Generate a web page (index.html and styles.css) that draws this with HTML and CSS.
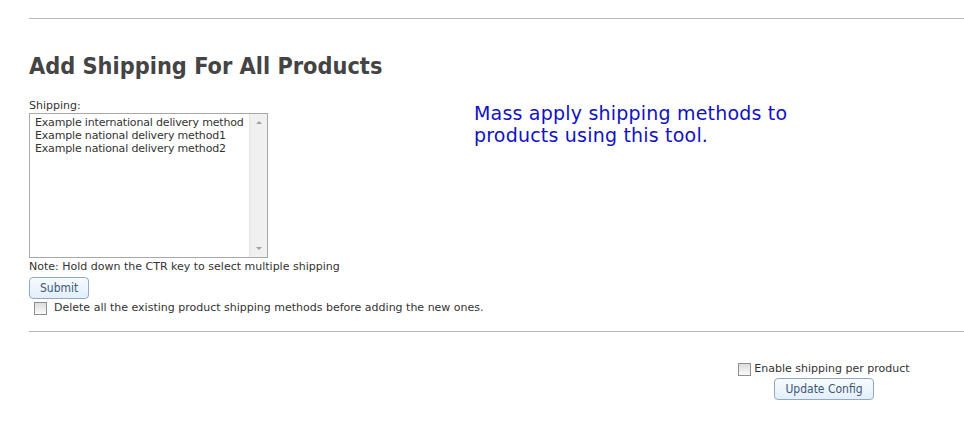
FILE: index.html
```html
<!DOCTYPE html>
<html>
<head>
<meta charset="utf-8">
<link rel="stylesheet" href="styles.css">
</head>
<body>
<div class="page">
  <hr class="rule rule-top">
  <h2 class="title">Add Shipping For All Products</h2>
  <div class="row">
    <form class="mass-form">
      <label class="field-label">Shipping:</label>
      <div class="listbox">
        <div class="options">
          <div>Example international delivery method</div>
          <div>Example national delivery method1</div>
          <div>Example national delivery method2</div>
        </div>
        <div class="scrollbar">
          <span class="arrow up"></span>
          <span class="arrow down"></span>
        </div>
      </div>
      <div class="note">Note: Hold down the CTR key to select multiple shipping</div>
      <button type="button" class="btn">Submit</button>
      <label class="check-line">
        <span class="checkbox"></span>
        <span>Delete all the existing product shipping methods before adding the new ones.</span>
      </label>
    </form>
    <p class="info">Mass apply shipping methods to<br>products using this tool.</p>
  </div>
  <hr class="rule rule-bottom">
  <div class="config">
    <label class="config-check"><span class="checkbox"></span><span>Enable shipping per product</span></label>
    <button type="button" class="btn btn-config">Update Config</button>
  </div>
</div>
</body>
</html>
```

FILE: styles.css
```css
html, body { margin: 0; padding: 0; background: #fff; }
body {
  font-family: "DejaVu Sans", sans-serif;
  font-size: 11px;
  color: #333;
}
.page { padding-left: 29px; }
.rule {
  border: 0;
  height: 1px;
  background: #b8b8b8;
  margin: 0;
}
.rule-top { margin-top: 18px; }
.title {
  margin: 31px 0 0;
  font-family: "DejaVu Sans Condensed", "DejaVu Sans", sans-serif;
  font-size: 23.3px;
  font-weight: bold;
  color: #444;
  line-height: 32px;
}
.row { display: flex; margin-top: 17px; }
.mass-form { width: 445px; flex: none; display: flex; flex-direction: column; align-items: flex-start; white-space: nowrap; }
.field-label { line-height: 13px; height: 13px; color: #333; }
.listbox {
  margin-top: 1px;
  width: 237px;
  height: 143px;
  border: 1px solid #a9a9a9;
  display: flex;
  background: #fff;
}
.options { flex: 1; min-width: 0; overflow: hidden; padding: 2px 0 0 5px; line-height: 13px; color: #333; letter-spacing: -0.17px; }
.scrollbar {
  width: 17px;
  flex: none;
  background: #f0f0f0;
  border-left: 1px solid #e4e4e4;
  position: relative;
}
.arrow {
  position: absolute;
  left: 6px;
  width: 0; height: 0;
  border-left: 3px solid transparent;
  border-right: 3px solid transparent;
}
.arrow.up { top: 7px; border-bottom: 3px solid #a0a0a0; }
.arrow.down { bottom: 7px; border-top: 3px solid #a0a0a0; }
.note { margin-top: 2px; line-height: 14px; }
.btn {
  font-family: "DejaVu Sans Condensed", "DejaVu Sans", sans-serif;
  font-size: 12px;
  color: #3d5877;
  background: linear-gradient(#f7fbff, #e3eefa);
  border: 1px solid #8fa9c6;
  border-radius: 4px;
  height: 22px;
  padding: 0 10px;
  margin-top: 3px;
}
.check-line { display: flex; align-items: center; margin-top: 2px; padding-left: 5px; line-height: 14px; }
.checkbox {
  display: inline-block;
  flex: none;
  width: 11px; height: 11px;
  border: 1px solid #8f8f8f;
  background: linear-gradient(#dcdcdc, #fafafa);
  margin-right: 7px;
  box-sizing: content-box;
}
.info {
  margin: 0;
  padding-top: 3px;
  color: #1212c0;
  font-family: "DejaVu Sans", sans-serif;
  font-size: 19px;
  letter-spacing: 0.2px;
  line-height: 22px;
  white-space: nowrap;
}
.rule-bottom { margin-top: 16px; }
.config {
  display: flex;
  flex-direction: column;
  align-items: center;
  width: 180px;
  margin-left: 705px;
  margin-top: 30px;
  white-space: nowrap;
}
.config-check { display: flex; align-items: center; line-height: 14px; color: #333; font-size: 11px; }
.config-check .checkbox { margin-right: 3px; }
.btn-config { margin-top: 2px; }
```
